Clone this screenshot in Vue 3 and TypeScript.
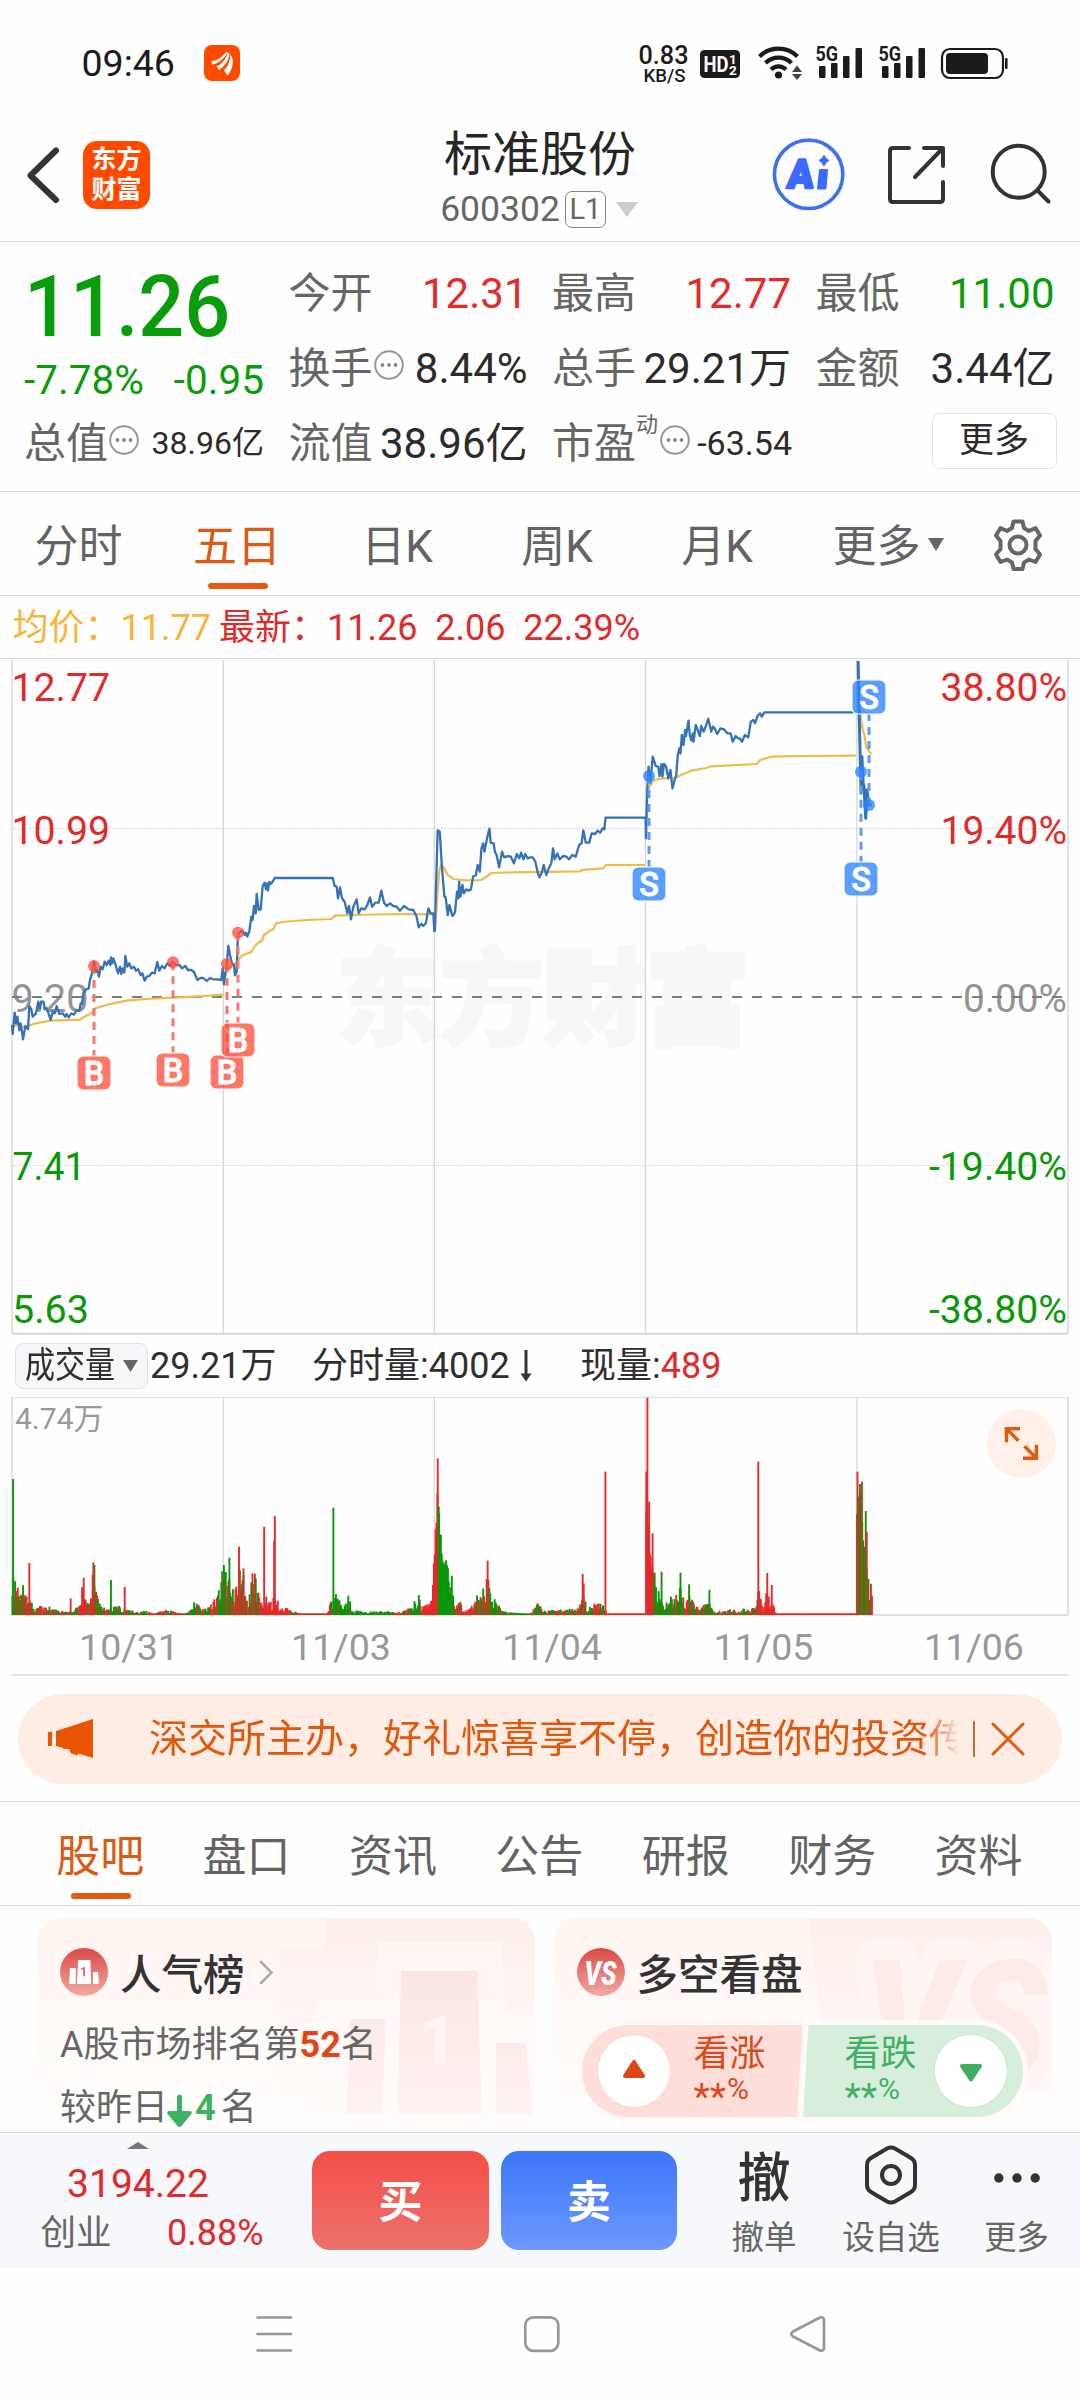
<script setup lang="ts">
interface Marker { kind: 'B' | 'S'; x: number; dot: number; badge: number }
interface Bar { x: number; h: number; up: boolean }

const periods: string[] = ['分时', '五日', '日K', '周K', '月K']
const sections: string[] = ['股吧', '盘口', '资讯', '公告', '研报', '财务', '资料']

const dayLines: number[] = [223.3, 434.3, 645.4, 856.9]

const markers: Marker[] = [
  { kind: 'B', x: 94, dot: 966, badge: 1073 },
  { kind: 'B', x: 173, dot: 962.3, badge: 1070 },
  { kind: 'B', x: 227, dot: 964, badge: 1072 },
  { kind: 'B', x: 238, dot: 932.7, badge: 1040 },
  { kind: 'S', x: 649, dot: 776, badge: 884 },
  { kind: 'S', x: 861, dot: 771.7, badge: 879 },
  { kind: 'S', x: 869, dot: 805, badge: 697 },
]

const dates = [
  { x: 129, t: '10/31' },
  { x: 341, t: '11/03' },
  { x: 552, t: '11/04' },
  { x: 763.5, t: '11/05' },
  { x: 974, t: '11/06' },
]

// Price and average lines, in chart units (first two days / last three days).
const priceA =
  '36,1125 38,1152 44,1088 48,1120 52,1100 58,1140 62,1120 69,1168 76,1128 84,1138 88,1068 94,1078 98,1100 108,1090 115,1055 120,1075 124,1054 131,1056 134,1078 140,1074 146,1092 152,1110 158,1085 164,1090 170,1068 178,1092 188,1090 196,1100 200,1092 206,1102 214,1090 222,1094 230,1080 238,1082 242,1060 246,1062 250,1030 258,1018 266,1016 270,990 276,970 282,935 288,965 292,960 297,980 302,950 308,958 314,935 320,945 326,932 331,945 333,922 336,940 340,925 347,945 354,970 360,950 364,972 368,955 373,968 376,918 382,950 388,940 394,955 402,950 408,962 414,958 422,975 427,970 434,992 440,980 448,978 456,968 464,970 472,936 478,962 486,948 494,955 502,940 510,948 518,935 528,945 538,945 546,955 556,948 564,960 574,960 582,966 592,990 602,984 610,984 620,993 630,984 640,988 652,988 664,990 668,955 672,1003 676,970 680,950 685,887 690,915 696,940 702,945 705,976 710,965 714,850 722,846 728,842 734,855 738,848 742,860 748,845 754,800 758,810 762,768 767,790 770,732 776,780 782,778 788,708 794,698 798,718 802,700 804,722 808,696 812,702 818,695 824,684 998,684 1004,708 1010,710 1014,745 1020,712 1026,745 1034,755 1042,790 1047,768 1053,808 1060,770 1070,748 1076,790 1084,775 1094,778 1102,765 1110,742 1116,770 1126,758 1136,758 1144,722 1152,758 1160,768 1170,760 1180,768 1190,770 1200,782 1212,768 1226,778 1240,780 1250,800 1256,832 1264,822 1270,828 1278,818 1285,775 1292,790 1300,790 1303,845'
const priceB =
  '35,845 42,541 47,545 52,650 58,740 61,742 66,795 70,765 77,798 83,788 88,725 91,745 93,695 96,740 101,705 104,730 110,718 116,722 121,718 126,680 133,675 137,645 142,665 146,595 150,580 153,605 160,560 165,536 168,578 175,580 178,605 182,615 188,652 195,605 200,622 208,618 216,620 223,640 230,612 236,625 240,608 246,628 250,612 256,625 262,622 268,622 274,635 280,670 284,682 290,665 294,645 300,675 306,655 312,640 316,595 320,628 326,610 332,628 340,618 348,620 354,628 362,615 370,620 378,585 384,580 388,541 394,578 402,578 408,550 416,552 422,542 428,548 434,535 438,538 441,503 536,503 537,565 540,420 543,350 547,400 553,320 560,348 566,350 569,378 574,342 576,380 580,342 585,350 590,385 595,360 600,415 605,390 609,375 612,320 616,295 619,310 622,255 626,285 630,240 632,258 638,212 641,255 645,272 648,250 650,275 655,225 660,240 665,258 668,228 674,245 680,225 685,206 692,245 696,230 700,235 706,252 714,235 722,238 730,250 738,250 743,275 750,258 756,265 760,265 765,275 772,255 780,262 786,215 792,210 796,220 802,198 808,190 812,200 818,187 1036,187'
const priceC = '1041,33 1043,170 1048,430 1050,320 1053,400 1055,410 1059,505 1062,420 1064,440 1066,465 1073,463'
const avgA =
  '36,1130 50,1125 76,1132 100,1122 150,1112 240,1109 250,1102 275,1090 285,1075 330,1062 380,1052 440,1047 520,1043 600,1039 670,1034'
const avgA2 =
  '672,985 682,962 700,945 716,930 722,920 735,912 752,908 765,888 775,878 786,872 792,855 810,842 820,838 828,820 845,816 920,810 994,807 1005,797 1060,795 1200,792 1300,793'
const avgB = '36,840 41,740 46,660 51,643 56,652 66,675 80,687 110,691 145,690 155,682 170,669 220,667 380,664 390,659 435,655 442,645 536,645'
const avgB2 = '537,500 541,420 548,405 556,390 575,386 607,384 625,372 645,362 680,354 690,349 800,342 808,330 835,320 900,318 1036,317'
const avgC = '1044,165 1048,210 1052,240 1056,255 1060,290 1067,305 1073,312'

const unit = 2.904
const envelope: [number, number][] = [
  [36, 120], [45, 110], [55, 60], [68, 100], [75, 50], [90, 40], [100, 15], [115, 40], [125, 20], [150, 25], [165, 12],
  [190, 10], [225, 20], [240, 100], [248, 40], [262, 40], [272, 140], [282, 70], [290, 30], [320, 20], [345, 24], [370, 15],
  [400, 10], [420, 12], [450, 5], [480, 14], [500, 12], [540, 3], [565, 36], [590, 15], [610, 30], [632, 70], [648, 140],
  [665, 120], [680, 50], [692, 130], [705, 120], [720, 20], [733, 130], [745, 100], [760, 30], [775, 60], [790, 30],
  [800, 90], [810, 20], [830, 20], [860, 8], [880, 3], [950, 3], [960, 40], [978, 60], [995, 20], [1012, 60], [1022, 15],
  [1060, 8], [1110, 12], [1150, 7], [1195, 20], [1215, 60], [1225, 20], [1250, 40], [1258, 120], [1264, 300], [1271, 430],
  [1277, 280], [1285, 200], [1298, 160], [1310, 80], [1320, 40], [1332, 55], [1345, 10], [1370, 30], [1395, 70],
  [1410, 90], [1418, 110], [1425, 50], [1445, 40], [1460, 10], [1500, 6], [1540, 4], [1565, 36], [1575, 12], [1630, 16],
  [1680, 18], [1692, 80], [1705, 15], [1725, 30], [1745, 36], [1760, 12], [1770, 3], [1875, 3], [1876, 340], [1884, 300],
  [1890, 170], [1900, 110], [1910, 80], [1920, 60], [1930, 30], [1950, 60], [1960, 40], [1972, 90], [1982, 90],
  [1990, 30], [2000, 60], [2012, 40], [2030, 20], [2060, 36], [2072, 10], [2110, 12], [2125, 20], [2140, 7],
  [2155, 20], [2180, 18], [2195, 20], [2203, 70], [2215, 20], [2225, 60], [2242, 50], [2250, 10], [2255, 3],
  [2486, 3], [2488, 350], [2500, 380], [2506, 260], [2512, 170], [2518, 150], [2523, 90], [2533, 60],
]
const spikes: [number, number, boolean][] = [
  [38, 408, false], [85, 156, true], [205, 50, true], [243, 112, true], [274, 150, false], [271, 158, true],
  [322, 105, false], [362, 84, true], [650, 150, false], [666, 172, false], [694, 205, true], [707, 140, true],
  [733, 125, true], [767, 265, true], [796, 222, true], [798, 297, true], [968, 322, false], [1271, 470, true],
  [1274, 325, false], [1312, 118, false], [1416, 163, true], [1692, 123, true], [1695, 95, true], [1758, 430, true],
  [1877, 430, true], [1880, 652, true], [1885, 340, true], [1895, 245, true], [1901, 127, false], [1921, 130, false],
  [1976, 127, false], [2001, 92, false], [2060, 76, false], [2202, 460, true], [2228, 126, true], [2241, 90, true],
  [2490, 430, true], [2497, 393, false], [2503, 400, true], [2514, 312, false], [2517, 250, true], [2529, 94, true],
]
const bias: [number, number, number][] = [
  [36, 84, 0.65], [345, 430, 0.3], [540, 575, 0.2], [748, 965, 0.85], [966, 1140, 0.12], [1190, 1222, 0.2],
  [1228, 1272, 0.95], [1273, 1316, 0.08], [1317, 1420, 0.75], [1421, 1600, 0.3], [1759, 1876, 1], [1877, 1898, 0.6],
  [1899, 1960, 0.3], [2204, 2486, 1], [2492, 2524, 0.3],
]

function heightAt(x: number): number {
  for (let i = 1; i < envelope.length; i++) {
    const [x1, h1] = envelope[i]
    if (x <= x1) {
      const [x0, h0] = envelope[i - 1]
      return h0 + ((h1 - h0) * (x - x0)) / (x1 - x0)
    }
  }
  return 0
}

function buildBars(): Bar[] {
  let seed = 20251
  const next = (): number => {
    seed = (seed * 16807) % 2147483647
    return seed / 2147483647
  }
  const bars: Bar[] = []
  for (let x = 36; x <= 2533; x += 2.56) {
    const r = next()
    const c = next()
    const range = bias.find(([a, b]) => x >= a && x <= b)
    const base = heightAt(x)
    const f = base > 130 ? 0.72 + 0.28 * r : 0.35 + 0.8 * r
    bars.push({ x: x / unit, h: Math.max(1.5, (base * f) / 3), up: c < (range ? range[2] : 0.55) })
  }
  for (const [x, h, up] of spikes) bars.push({ x: x / unit, h: h / 3, up })
  return bars
}
const bars = buildBars()
</script>

<template>
  <div class="screen">
    <header class="top">
      <div class="status">
        <span class="clock">09:46</span>
        <svg class="app-dot" width="36" height="36" viewBox="0 0 36 36">
          <rect width="36" height="36" rx="8" fill="#ff4a00" />
          <path d="M7.500 16c6-.5 10-3 14.500-9 .8 0 1.200.4 1.400 1C19.500 14 14.500 18.500 8 19.500zM12.500 21.500C18 19 22 14 24 7.500c.8.2 1.200.8 1.500 1.600C24.500 16 20.500 21.500 15 25zM20 25.500c4-4 6-9 6.300-15.500 1.200 1 1.900 2 2.200 3.500C29.500 20 27.500 26 23.500 30.500z" fill="#fff" />
        </svg>
        <svg class="status-right" width="380" height="44" viewBox="636 40 380 44">
          <g fill="#1b1b1b">
            <text x="663.500" y="63" text-anchor="middle" font-size="25" font-weight="500" textLength="50" lengthAdjust="spacingAndGlyphs">0.83</text>
            <text x="664.500" y="81" text-anchor="middle" font-size="19" font-weight="500" textLength="42" lengthAdjust="spacingAndGlyphs">KB/S</text>
            <rect x="700" y="49" width="40" height="28" rx="4.500" />
            <text x="703.500" y="71" font-size="22.500" font-weight="700" fill="#fff" textLength="25" lengthAdjust="spacingAndGlyphs">HD</text>
            <text x="729" y="62.500" font-size="13.500" font-weight="700" fill="#fff">1</text>
            <text x="729" y="74" font-size="13.500" font-weight="700" fill="#fff">2</text>
            <circle cx="778.500" cy="74" r="3.600" />
            <path d="M792 71l5-6.500 5 6.500zM792 73l5 6 5-6z" fill="#444" />
          </g>
          <g fill="none" stroke="#1b1b1b" stroke-width="4.200">
            <path d="M759.500 55.500a27 27 0 0 1 38 0" />
            <path d="M765.500 62a18.500 18.500 0 0 1 26 0" />
            <path d="M771 68.500a10.500 10.500 0 0 1 15 0" />
          </g>
          <g v-for="dx in [0, 63]" :key="dx" :transform="`translate(${dx} 0)`" fill="#1b1b1b">
            <text x="815.500" y="60" font-size="21" font-weight="700" textLength="22.500" lengthAdjust="spacingAndGlyphs">5G</text>
            <rect x="819" y="65" width="6.500" height="12" rx="1" />
            <rect x="831" y="62" width="6.500" height="15" rx="1" />
            <rect x="843" y="55" width="6.500" height="22" rx="1" />
            <rect x="855.500" y="47" width="6.500" height="30" rx="1" />
          </g>
          <rect x="942" y="48" width="61" height="29" rx="8" fill="none" stroke="#1b1b1b" stroke-width="2.200" />
          <rect x="946" y="52" width="42" height="21" rx="4" fill="#1b1b1b" />
          <rect x="1005" y="57" width="2.600" height="11" rx="1.200" fill="#1b1b1b" />
        </svg>
      </div>
      <div class="bar">
        <div class="left">
          <svg width="36" height="60" viewBox="0 0 36 60"><path d="M31 5.500L5.500 30.500 31 55" fill="none" stroke="#333" stroke-width="6" stroke-linecap="round" stroke-linejoin="round" /></svg>
          <div class="logo"><span>东方</span><span>财富</span></div>
        </div>
        <div class="name">
          <div class="title">标准股份</div>
          <div class="code">
            <span>600302</span><span class="lv">L1</span>
            <svg width="22" height="15" viewBox="0 0 22 15"><path d="M0 0h22L11 15z" fill="#ccc" /></svg>
          </div>
        </div>
        <svg class="actions" width="300" height="80" viewBox="770 134 300 80">
          <circle cx="808.600" cy="174.300" r="34.200" fill="none" stroke="#4070ee" stroke-width="3.600" />
          <g fill="#3a6aff" stroke="#3a6aff">
            <text x="0" y="0" transform="translate(786.500 187.500) skewX(-5)" font-size="40" font-weight="900" stroke-width="2.600" stroke-linejoin="round" textLength="26" lengthAdjust="spacingAndGlyphs">A</text>
            <path d="M820 170h7l-1.500 18.500h-7.500z" stroke-width="2" stroke-linejoin="round" />
            <path d="M824 155q1.400 4.200 5 5.500-3.600 1.300-5 5.500-1.400-4.200-5-5.500 3.600-1.300 5-5.500z" stroke-width="1" />
          </g>
          <g fill="none" stroke="#333" stroke-width="4" stroke-linecap="round" stroke-linejoin="round">
            <path d="M909 148h-16q-3 0-3 3v48q0 3 3 3h47q3 0 3-3v-17M924 148h19v18M943 148l-28 29" />
            <circle cx="1018.700" cy="171.700" r="26" />
            <path d="M1037.500 190.500l11 11" />
          </g>
        </svg>
      </div>
    </header>

    <section class="quote">
      <div class="col">
        <div class="price green"><span>11.26</span></div>
        <div class="chg green"><span>-7.78%</span><span>-0.95</span></div>
        <div class="cell cap">
          <span class="lab">总值</span>
          <svg class="tip" viewBox="0 0 30 30"><circle cx="15" cy="15" r="13.800" /><circle class="d" cx="8.500" cy="15" r="1.900" /><circle class="d" cx="15" cy="15" r="1.900" /><circle class="d" cx="21.500" cy="15" r="1.900" /></svg>
          <span class="val small">38.96亿</span>
        </div>
      </div>
      <div class="col">
        <div class="cell"><span class="lab">今开</span><span class="val red">12.31</span></div>
        <div class="cell">
          <span class="lab">换手</span>
          <svg class="tip" viewBox="0 0 30 30"><circle cx="15" cy="15" r="13.800" /><circle class="d" cx="8.500" cy="15" r="1.900" /><circle class="d" cx="15" cy="15" r="1.900" /><circle class="d" cx="21.500" cy="15" r="1.900" /></svg>
          <span class="val">8.44%</span>
        </div>
        <div class="cell"><span class="lab">流值</span><span class="val">38.96亿</span></div>
      </div>
      <div class="col">
        <div class="cell"><span class="lab">最高</span><span class="val red">12.77</span></div>
        <div class="cell"><span class="lab">总手</span><span class="val">29.21万</span></div>
        <div class="cell">
          <span class="lab">市盈</span><span class="sup">动</span>
          <svg class="tip pe" viewBox="0 0 30 30"><circle cx="15" cy="15" r="13.800" /><circle class="d" cx="8.500" cy="15" r="1.900" /><circle class="d" cx="15" cy="15" r="1.900" /><circle class="d" cx="21.500" cy="15" r="1.900" /></svg>
          <span class="val pe-val">-63.54</span>
        </div>
      </div>
      <div class="col">
        <div class="cell"><span class="lab">最低</span><span class="val green">11.00</span></div>
        <div class="cell"><span class="lab">金额</span><span class="val">3.44亿</span></div>
        <div class="cell end"><button class="more">更多</button></div>
      </div>
    </section>

    <nav class="periods">
      <span v-for="p in periods" :key="p" class="tab" :class="{ on: p === '五日' }">{{ p }}</span>
      <span class="tab drop">更多<svg width="16" height="13" viewBox="0 0 16 13"><path d="M0 0h16L8 13z" fill="#666" /></svg></span>
      <span class="gear">
        <svg width="54" height="54" viewBox="-27 -27 54 54" fill="none" stroke="#666" stroke-width="4" stroke-linejoin="round">
          <path d="M-4.500-23.500h9l1.500 6.500 5 3 6.500-3 4.500 7.500-4.500 5.500v8l4.500 5.500-4.500 7.500-6.500-2.500-5 3-1.500 6.500h-9l-1.500-6.500-5-3-6.500 2.500-4.500-7.500 4.500-5.500v-8l-4.500-5.500 4.500-7.500 6.500 3 5-3z" />
          <circle r="8.500" />
        </svg>
      </span>
    </nav>

    <div class="legend"><span class="avg">均价：11.77</span><span class="last">最新：11.26&nbsp; 2.06&nbsp; 22.39%</span></div>

    <svg class="chart" width="1080" height="677" viewBox="0 658 1080 677">
      <path d="M0 658.500H1080" stroke="#d9d9d9" />
      <text x="336" y="1036" font-size="105" font-weight="900" fill="#f7f7f7" stroke="#f7f7f7" stroke-width="3" textLength="414">东方财富</text>
      <path v-for="x in dayLines" :key="x" :d="`M${x} 660V1334`" stroke="#d6d6d6" stroke-width="1.300" />
      <path d="M12 659V1334M1068 659V1334" stroke="#e0e0e0" stroke-width="1.800" />
      <path d="M12 1333.700H1068" stroke="#d6d6d6" stroke-width="2" />
      <path d="M12 828.500H1068M12 1165.500H1068" stroke="#d0d0d0" stroke-dasharray="1.500 1.500" />
      <g font-size="39.500" fill="#e02b2b">
        <text x="11.500" y="701" textLength="98.500" lengthAdjust="spacingAndGlyphs">12.77</text>
        <text x="11.500" y="843.500" textLength="98.500" lengthAdjust="spacingAndGlyphs">10.99</text>
        <text x="11.500" y="1012" fill="#949494">9.20</text>
        <text x="12.500" y="1180" fill="#0a970a" textLength="73" lengthAdjust="spacingAndGlyphs">7.41</text>
        <text x="12" y="1322.500" fill="#0a970a">5.63</text>
        <g text-anchor="end">
          <text x="1067" y="701" textLength="126.500" lengthAdjust="spacingAndGlyphs">38.80%</text>
          <text x="1067" y="843.500" textLength="126.500" lengthAdjust="spacingAndGlyphs">19.40%</text>
          <text x="1067" y="1012" fill="#949494" textLength="104" lengthAdjust="spacingAndGlyphs">0.00%</text>
          <text x="1067" y="1180" fill="#0a970a" textLength="138" lengthAdjust="spacingAndGlyphs">-19.40%</text>
          <text x="1067" y="1322.500" fill="#0a970a" textLength="138" lengthAdjust="spacingAndGlyphs">-38.80%</text>
        </g>
      </g>
      <path d="M12 997H1068" stroke="#7c7c7c" stroke-width="1.800" stroke-dasharray="10 10" />
      <g fill="none" stroke-linejoin="round">
        <g stroke="#efbb4a" stroke-width="2.200">
          <g transform="translate(0 650) scale(.33333)"><polyline class="ln" :points="avgA" /><polyline class="ln" :points="avgA2" /></g>
          <g transform="translate(420 650) scale(.42088 .33333)"><polyline class="ln" :points="avgB" /><polyline class="ln" :points="avgB2" /><polyline class="ln" :points="avgC" /></g>
        </g>
        <g stroke="#3573b5" stroke-width="2.300">
          <g transform="translate(0 650) scale(.33333)"><polyline class="ln" :points="priceA" /></g>
          <g transform="translate(420 650) scale(.42088 .33333)"><polyline class="ln" :points="priceB" /><polyline class="ln" stroke-width="3" :points="priceC" /></g>
        </g>
      </g>
      <g v-for="(m, i) in markers" :key="i" :class="['mk', m.kind]">
        <path :d="`M${m.x} ${m.dot}V${m.badge > m.dot ? m.badge - 17 : m.badge + 17}`" fill="none" stroke-width="3" stroke-dasharray="8 6" />
        <circle :cx="m.x" :cy="m.dot" r="6" />
        <rect :x="m.x - 17" :y="m.badge - 17" width="34" height="34" rx="6" stroke="#fff" stroke-width="1.200" />
        <text :x="m.x" :y="m.badge + 11.500" text-anchor="middle" font-size="32.500" font-weight="500">{{ m.kind }}</text>
      </g>
    </svg>

    <div class="vol-head">
      <span class="pick"><span class="pick-t">成交量</span><svg width="15" height="12" viewBox="0 0 15 12"><path d="M0 0h15L7.500 12z" fill="#666" /></svg></span>
      <span class="v1">29.21万</span>
      <span class="v2">分时量:4002</span>
      <svg class="dn" width="12" height="32" viewBox="0 0 12 32"><path d="M6 0v26" stroke="#333" stroke-width="3" /><path d="M.5 23.500h11L6 31.500z" fill="#333" /></svg>
      <span class="v3">现量:<b>489</b></span>
    </div>

    <svg class="chart" width="1080" height="280" viewBox="0 1397 1080 280">
      <path d="M12 1397.500H1068" stroke="#dedede" />
      <path v-for="x in dayLines" :key="x" :d="`M${x} 1397V1615`" stroke="#d6d6d6" stroke-width="1.200" />
      <path d="M12 1397V1615M1068 1397V1615M12 1615H1068" fill="none" stroke="#e0e0e0" stroke-width="1.800" />
      <text x="15" y="1429" font-size="30" fill="#999">4.74万</text>
      <rect v-for="(b, i) in bars" :key="i" :x="b.x - 0.9" :y="1615 - b.h" width="1.900" :height="b.h" :fill="b.up ? '#e42a2a' : '#0a960a'" />
      <circle cx="1021.400" cy="1443.500" r="34.500" fill="#fff0e9" />
      <path d="M1020 1428.800h-13.500v13.500M1006.500 1428.800l12 12M1023 1458.200h13.500v-13.500M1036.500 1458.200l-12-12" fill="none" stroke="#e25a10" stroke-width="3.400" />
      <text v-for="d in dates" :key="d.t" :x="d.x" y="1660" text-anchor="middle" font-size="37.500" fill="#999">{{ d.t }}</text>
      <path d="M12 1675H1068" stroke="#e4e4e4" stroke-width="2" />
    </svg>

    <div class="notice-wrap">
      <div class="notice">
        <svg class="horn" width="46" height="40" viewBox="0 0 46 40"><path d="M0 13h4v14H0zM8 12L45 0v39l-15-4.500v2l-7-2-2-4.500H15V29l-7-2z" fill="#ea5504" /></svg>
        <div class="marquee">深交所主办，好礼惊喜享不停，创造你的投资传奇</div>
        <i class="sep"></i>
        <svg width="34" height="34" viewBox="0 0 34 34"><path d="M2 2l30 30M32 2L2 32" stroke="#e25a10" stroke-width="3" stroke-linecap="round" /></svg>
      </div>
    </div>

    <nav class="sections">
      <span v-for="s in sections" :key="s" class="tab" :class="{ on: s === '股吧' }">{{ s }}</span>
    </nav>

    <section class="cards">
      <div class="card">
        <svg class="bg" width="498" height="214" viewBox="36.500 1918 498 214">
          <defs>
            <linearGradient id="podA" x1="0" y1="0" x2="0" y2="1"><stop offset="0" stop-color="#fcefec" /><stop offset="1" stop-color="#fff9f7" stop-opacity="0" /></linearGradient>
            <linearGradient id="podB" x1="0" y1="0" x2="0" y2="1"><stop offset="0" stop-color="#fae6e3" /><stop offset="1" stop-color="#fdf3f1" /></linearGradient>
            <linearGradient id="podC" x1="0" y1="0" x2="0" y2="1"><stop offset="0" stop-color="#fff7f4" /><stop offset="1" stop-color="#fffcfb" /></linearGradient>
          </defs>
          <path d="M326 1918H536V2132H276L279 1950H324z" fill="url(#podA)" />
          <path d="M378 1942H500L506 2012H540V2140H310L314 1999H374z" fill="url(#podC)" />
          <path d="M400.500 1971h76l5 143h-84.500zM350 2019h35l-3 95h-36zM495 2043h30l7 71h-36z" fill="url(#podB)" />
          <text x="418" y="2064" font-size="66" font-weight="900" fill="#fff6f4" textLength="38" lengthAdjust="spacingAndGlyphs">1</text>
        </svg>
        <div class="card-h">
          <svg width="48" height="48" viewBox="0 0 48 48">
            <defs><linearGradient id="ic" x1="0" y1="0" x2="0" y2="1"><stop offset="0" stop-color="#d94a46" /><stop offset="1" stop-color="#f3aaa4" /></linearGradient></defs>
            <circle cx="24" cy="24" r="24" fill="url(#ic)" />
            <path d="M18 12h12.500l.5 24H17zM10 20h6l-.5 16H9zM33 24h5l1 12h-6z" fill="#fff" />
            <text x="23.800" y="28" text-anchor="middle" font-size="12" font-weight="700" fill="#dd6560">1</text>
          </svg>
          <span class="card-t">人气榜</span>
          <svg class="chev" width="15" height="25" viewBox="0 0 15 25"><path d="M2 2l10.500 10.500L2 23" fill="none" stroke="#aaa" stroke-width="2.600" stroke-linecap="round" /></svg>
        </div>
        <div class="line l1">A股市场排名第<b class="hot">52</b>名</div>
        <div class="line l2">较昨日<svg width="25" height="34" viewBox="0 0 25 34"><path d="M10 2q2.500-3 5 0v15h8q3 .5 1 3.500L14.500 32q-2 2-4 0L1 20.500q-2-3 1-3.500h8z" fill="#3eb264" /></svg><b class="cool">4</b>名</div>
      </div>

      <div class="card">
        <svg class="bg" width="499" height="214" viewBox="553 1918 499 214">
          <defs>
            <linearGradient id="vsA" x1="0" y1="0" x2="0" y2="1"><stop offset="0" stop-color="#fdefec" /><stop offset="1" stop-color="#fff8f6" /></linearGradient>
            <clipPath id="half"><rect x="553" y="1918" width="499" height="184" /></clipPath>
          </defs>
          <path d="M808.500 1918H1053V2090H830z" fill="url(#vsA)" />
          <g font-weight="900" font-style="italic" font-size="164" clip-path="url(#half)" stroke-linejoin="round">
            <text x="863" y="2077" textLength="184" lengthAdjust="spacingAndGlyphs" fill="#fff5f3" stroke="#fff5f3" stroke-width="40">VS</text>
            <text x="863" y="2077" textLength="184" lengthAdjust="spacingAndGlyphs" fill="#fdebe9">VS</text>
          </g>
          <rect x="577" y="2020" width="451" height="102" rx="51" fill="#fffaf9" />
          <path d="M628 2025H802.500L797 2117H628a46 46 0 0 1 0-92z" fill="#fddedb" />
          <path d="M808.500 2025H977a46 46 0 0 1 0 92H803z" fill="#d7eedd" />
          <circle cx="634" cy="2071" r="36.500" fill="#fff" stroke="#fbd2ce" stroke-width="1" />
          <circle cx="970.800" cy="2071" r="36.500" fill="#fff" stroke="#c9e8d2" stroke-width="1" />
          <path d="M634 2062l9 14h-18z" fill="#e04516" stroke="#e04516" stroke-width="4" stroke-linejoin="round" />
          <path d="M971 2079.500l9-13.500h-18z" fill="#3eb060" stroke="#3eb060" stroke-width="4" stroke-linejoin="round" />
          <g font-size="36" fill="#dc4a1c">
            <text x="693.500" y="2065.500">看涨</text>
            <text x="693.500" y="2109" font-size="37" textLength="32.500" lengthAdjust="spacingAndGlyphs">**</text>
            <text x="727" y="2099" font-size="30" textLength="22" lengthAdjust="spacingAndGlyphs">%</text>
          </g>
          <g font-size="36" fill="#42b067">
            <text x="844.500" y="2065.500">看跌</text>
            <text x="844.500" y="2109" font-size="37" textLength="32.500" lengthAdjust="spacingAndGlyphs">**</text>
            <text x="878" y="2099" font-size="30" textLength="22" lengthAdjust="spacingAndGlyphs">%</text>
          </g>
        </svg>
        <div class="card-h">
          <svg width="48" height="48" viewBox="0 0 48 48">
            <circle cx="24" cy="24" r="24" fill="url(#ic)" />
            <text x="7.500" y="36.500" font-size="34" font-weight="900" font-style="italic" fill="#fff" textLength="32" lengthAdjust="spacingAndGlyphs">VS</text>
          </svg>
          <span class="card-t">多空看盘</span>
        </div>
      </div>
    </section>

    <footer class="trade">
      <div class="index">
        <svg width="22" height="7" viewBox="0 0 22 7"><path d="M11 0l11 7H0z" fill="#777" /></svg>
        <div class="idx-v">3194.22</div>
        <div class="idx-r"><span class="idx-n">创业</span><span>0.88%</span></div>
      </div>
      <button class="buy">买</button>
      <button class="sell">卖</button>
      <div class="act a1"><span class="big">撤</span><span>撤单</span></div>
      <div class="act a2">
        <svg width="56" height="62" viewBox="-28 -31 56 62" fill="none" stroke="#333" stroke-width="4"><path d="M-4-26.500q4-2 8 0l16 9.500q4 2.500 4 7v20q0 4.500-4 7L4 26.500q-4 2-8 0L-20 17q-4-2.500-4-7v-20q0-4.500 4-7z" /><circle r="9" /></svg>
        <span>设自选</span>
      </div>
      <div class="act a3">
        <svg width="56" height="62" viewBox="-28 -31 56 62" fill="#333"><circle cx="-18.200" cy="3" r="4.700" /><circle cy="3" r="4.700" /><circle cx="18.200" cy="3" r="4.700" /></svg>
        <span>更多</span>
      </div>
    </footer>

    <div class="sysnav">
      <svg width="1080" height="132" viewBox="0 2268 1080 132" fill="none" stroke="#979797" stroke-width="2.700" stroke-linecap="round" stroke-linejoin="round">
        <path d="M257.500 2317.500h33.500M257.500 2334h33.500M257.500 2350.500h33.500" />
        <rect x="525.300" y="2317.300" width="33" height="33.500" rx="8" />
        <path d="M793 2331.500l27-14q4-1 4 3v27q0 4-4 3l-27-14q-3.500-2.500 0-5z" />
      </svg>
    </div>
  </div>
</template>

<style>
body {
  background: #fefefe;
}
</style>

<style scoped>
.screen {
  width: 1080px;
  height: 2400px;
  overflow: hidden;
  background: #fefefe;
  color: #333;
  font-family: Roboto, 'Noto Sans CJK SC', sans-serif;
  font-weight: 400;
  box-sizing: border-box;
}
.screen * {
  box-sizing: border-box;
}
svg {
  display: block;
  flex: none;
}
button {
  font-family: inherit;
  padding: 0;
  border: 0;
}
.red {
  color: #e42b2b;
}
.green {
  color: #0a9c0a;
}
.top {
  height: 242px;
  border-bottom: 1px solid #d8d8d8;
}
.status {
  height: 125px;
  display: flex;
  align-items: center;
  padding-left: 81.500px;
}
.clock {
  font-size: 37.500px;
  color: #1b1b1b;
  width: 122.500px;
  line-height: 44px;
}
.status-right {
  margin-left: 396px;
}
.bar {
  height: 116px;
  display: grid;
  grid-template-columns: 380px 320px 70px 300px;
}
.left {
  display: flex;
  align-items: center;
  height: 99px;
  padding-left: 25px;
}
.logo {
  margin-left: 22px;
  width: 67px;
  height: 68px;
  border-radius: 14px;
  background: #ff4a00;
  color: #fff;
  font-size: 25px;
  line-height: 30px;
  font-weight: 700;
  display: flex;
  flex-direction: column;
  align-items: center;
  padding-top: 4px;
}
.name {
  display: flex;
  flex-direction: column;
  align-items: center;
}
.title {
  font-size: 48px;
  line-height: 56px;
  color: #262626;
  padding-top: 2px;
}
.code {
  display: flex;
  align-items: center;
  font-size: 35.500px;
  line-height: 40px;
  color: #666;
  margin-top: 6px;
  margin-right: 2px;
}
.lv {
  width: 41px;
  height: 37px;
  border: 1.500px solid #888;
  border-radius: 7px;
  font-size: 29px;
  line-height: 34px;
  text-align: center;
  margin: 0 10px 0 5px;
}
.actions {
  grid-column: 4;
  margin-top: 9px;
}
.quote {
  height: 250px;
  border-bottom: 1px solid #d8d8d8;
  padding: 14px 0 0 24px;
  display: grid;
  grid-template-columns: 240px 239px 239px 239px;
  column-gap: 24.500px;
}
.price {
  height: 99px;
  line-height: 101px;
  font-size: 86px;
  font-weight: 500;
}
.price span {
  display: inline-block;
  transform: scaleX(0.94);
  transform-origin: 0 50%;
}
.chg {
  height: 51px;
  line-height: 51px;
  font-size: 40.500px;
  display: flex;
  justify-content: space-between;
}
.cell {
  height: 75px;
  display: flex;
  align-items: center;
  font-size: 42px;
  line-height: 75px;
}
.lab {
  color: #666;
}
.val {
  margin-left: auto;
  color: #2b2b2b;
}
.val.red {
  color: #e42b2b;
}
.val.green {
  color: #0a9c0a;
}
.val.small {
  font-size: 32px;
}
.tip {
  width: 30px;
  height: 30px;
  fill: none;
  stroke: #999;
  stroke-width: 2;
  margin: -7px 0 0 1px;
}
.tip .d {
  fill: #888;
  stroke: none;
}
.sup {
  font-size: 22px;
  color: #666;
  line-height: 24px;
  align-self: flex-start;
  margin: 7px 0 0 0;
}
.tip.pe {
  margin-left: 2px;
}
.pe-val {
  font-size: 34px;
  margin-right: -1px;
}
.end {
  justify-content: flex-end;
}
.more {
  width: 125px;
  height: 56px;
  margin: -5px -2px 0 0;
  border: 1.500px solid #e3e3e3;
  border-radius: 8px;
  background: #fff;
  font-size: 35px;
  line-height: 52px;
  color: #2b2b2b;
}
.periods {
  height: 104px;
  border-bottom: 1px solid #d8d8d8;
  display: grid;
  grid-template-columns: 157px 160px 160px 160px 160px 182px 78px;
}
.tab {
  display: flex;
  align-items: center;
  justify-content: center;
  position: relative;
  font-size: 44px;
  color: #636363;
  line-height: 100px;
  padding-top: 5px;
}
.tab.on {
  color: #dc5a14;
}
.tab.on::after {
  content: '';
  position: absolute;
  left: 50%;
  bottom: 8px;
  width: 60px;
  height: 6px;
  margin-left: -29px;
  border-radius: 3px;
  background: #e35a10;
}
.gear {
  display: flex;
  align-items: center;
  justify-content: center;
}
.drop svg {
  margin: -5px 0 0 7px;
}
.legend {
  height: 62px;
  line-height: 64px;
  font-size: 36px;
  padding-left: 12.500px;
  white-space: pre;
}
.avg {
  color: #f2b73c;
  margin-right: 8px;
}
.last {
  color: #dc2d2d;
}
.ln {
  vector-effect: non-scaling-stroke;
}
.mk text {
  fill: #fff;
  stroke: #fff;
  stroke-width: 0.8px;
}
.mk.B {
  fill: rgba(255, 76, 56, 0.76);
}
.mk.B path {
  stroke: #f5796c;
}
.mk.S {
  fill: rgba(45, 132, 252, 0.78);
}
.mk.S path {
  stroke: #5b9df6;
}
.vol-head {
  height: 62px;
  display: flex;
  align-items: center;
  padding-left: 15px;
  font-size: 36px;
  line-height: 64px;
  color: #2f2f2f;
  white-space: nowrap;
}
.pick {
  width: 133px;
  height: 46px;
  border: 1px solid #dfe2ea;
  border-radius: 8px;
  background: #f6f7fb;
  display: flex;
  align-items: center;
  padding-left: 9px;
  line-height: 46px;
}
.pick-t {
  width: 98px;
  transform: scaleX(0.835);
  transform-origin: 0 50%;
}
.v1 {
  margin-left: 2px;
  width: 162px;
}
.v2 {
  width: 197px;
}
.dn {
  margin: 0 48px 0 11px;
}
.v3 b {
  font-weight: 400;
  color: #e02b2b;
}
.notice-wrap {
  height: 125px;
  padding: 17px 18px 0;
  border-bottom: 1px solid #d8d8d8;
}
.notice {
  height: 90px;
  border-radius: 45px;
  background: #fdede4;
  display: flex;
  align-items: center;
  padding-left: 30px;
  color: #e0580e;
}
.marquee {
  width: 809px;
  margin-left: 55px;
  overflow: hidden;
  white-space: nowrap;
  font-size: 39px;
  line-height: 89px;
  -webkit-mask-image: linear-gradient(90deg, #000 775px, transparent 810px);
  mask-image: linear-gradient(90deg, #000 775px, transparent 810px);
}
.sep {
  width: 1.500px;
  height: 36px;
  background: #c86a3a;
  margin: 0 16px 0 15px;
}
.sections {
  height: 104px;
  border-bottom: 1px solid #d8d8d8;
  padding: 0 27px;
  display: grid;
  grid-template-columns: repeat(7, 146.400px);
}
.cards {
  height: 226px;
  overflow: hidden;
  padding: 12px 28px 0 36.500px;
  display: grid;
  grid-template-columns: 498px 499px;
  column-gap: 18.500px;
}
.card {
  position: relative;
  height: 260px;
  border-radius: 24px;
  overflow: hidden;
  background: linear-gradient(180deg, #fff4f0, #fffaf8 40%, #fffefd 90%);
}
.bg {
  position: absolute;
  left: 0;
  top: 0;
}
.card-h {
  position: relative;
  display: flex;
  align-items: center;
  height: 48px;
  margin: 30px 0 0 23.500px;
}
.card-t {
  font-size: 41.500px;
  font-weight: 500;
  line-height: 48px;
  margin-left: 12px;
  padding-top: 7px;
}
.chev {
  margin-left: 14px;
}
.line {
  position: relative;
  font-size: 36px;
  color: #666;
  padding-left: 23.500px;
  display: flex;
  align-items: center;
  line-height: 60px;
}
.l1 {
  margin-top: 19px;
}
.l2 {
  margin-top: 3px;
}
.l2 svg {
  margin: 6px 3px 0 -1px;
}
.hot {
  color: #e04516;
  font-weight: 700;
}
.cool {
  color: #3eb264;
  font-weight: 700;
  margin-right: 5px;
}
.trade {
  height: 136px;
  background: #f6f8fb;
  border-top: 1px solid #d3d6da;
  display: flex;
  align-items: flex-start;
}
.index {
  width: 276px;
  margin-right: 36px;
  display: flex;
  flex-direction: column;
  align-items: center;
  color: #e02b2b;
  padding-top: 9px;
}
.idx-v {
  font-size: 39px;
  line-height: 48px;
  margin-top: 11px;
}
.idx-r {
  width: 223px;
  margin-left: 28px;
  display: flex;
  justify-content: space-between;
  font-size: 36px;
  line-height: 50px;
}
.idx-n {
  color: #666;
  font-size: 35.500px;
}
.buy,
.sell {
  width: 177px;
  height: 99px;
  margin-top: 18px;
  border-radius: 18px;
  color: #fff;
  font-size: 44px;
  font-weight: 700;
  line-height: 105px;
}
.buy {
  background: linear-gradient(180deg, #f44f48, #ec716c);
  margin-right: 12px;
}
.sell {
  width: 176px;
  background: linear-gradient(180deg, #3b77f8, #6c98fe);
}
.act {
  display: flex;
  flex-direction: column;
  align-items: center;
  font-size: 32.500px;
  line-height: 40px;
  color: #666;
  padding-top: 11px;
  white-space: nowrap;
}
.act > :last-child {
  margin-top: 12px;
}
.big {
  font-size: 53px;
  line-height: 70px;
  height: 62px;
  color: #333;
  font-weight: 500;
}
.a1 {
  width: 126px;
  margin-left: 24px;
}
.a2 {
  width: 128px;
}
.a3 {
  width: 123px;
}
.sysnav {
  height: 132px;
  background: #fefefe;
}
</style>
